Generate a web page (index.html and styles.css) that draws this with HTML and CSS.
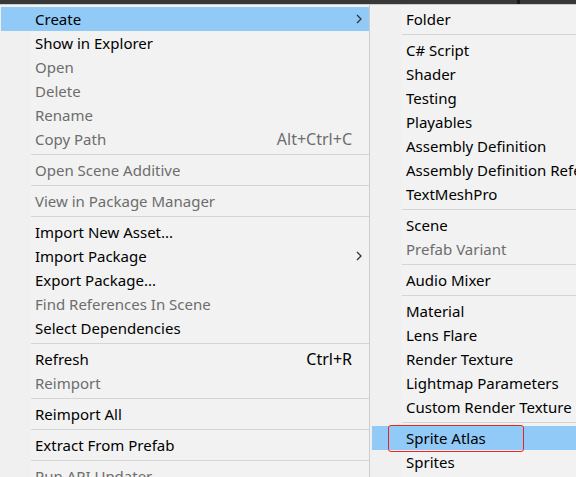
FILE: index.html
```html
<!DOCTYPE html>
<html lang="en">
<head>
<meta charset="utf-8">
<title>Assets menu</title>
<link rel="stylesheet" href="styles.css">
</head>
<body>
<div class="toolbar"><span class="toolbar-pane"></span><span class="toolbar-divider"></span></div>
<div class="menus">
  <div class="menu menu-main" role="menu" aria-label="Assets">
    <button class="item selected" role="menuitem"><span>Create</span><svg class="arrow" viewBox="0 0 6 10"><path d="M1 1l4 4-4 4"/></svg></button>
    <button class="item" role="menuitem">Show in Explorer</button>
    <button class="item" role="menuitem" disabled>Open</button>
    <button class="item" role="menuitem" disabled>Delete</button>
    <button class="item" role="menuitem" disabled>Rename</button>
    <button class="item" role="menuitem" disabled><span>Copy Path</span><span class="shortcut">Alt+Ctrl+C</span></button>
    <hr>
    <button class="item" role="menuitem" disabled>Open Scene Additive</button>
    <hr>
    <button class="item" role="menuitem" disabled>View in Package Manager</button>
    <hr>
    <button class="item" role="menuitem">Import New Asset...</button>
    <button class="item" role="menuitem"><span>Import Package</span><svg class="arrow" viewBox="0 0 6 10"><path d="M1 1l4 4-4 4"/></svg></button>
    <button class="item" role="menuitem">Export Package...</button>
    <button class="item" role="menuitem" disabled>Find References In Scene</button>
    <button class="item" role="menuitem">Select Dependencies</button>
    <hr>
    <button class="item" role="menuitem"><span>Refresh</span><span class="shortcut">Ctrl+R</span></button>
    <button class="item" role="menuitem" disabled>Reimport</button>
    <hr>
    <button class="item" role="menuitem">Reimport All</button>
    <hr>
    <button class="item" role="menuitem">Extract From Prefab</button>
    <hr>
    <button class="item" role="menuitem" disabled>Run API Updater</button>
  </div>
  <div class="menu menu-sub" role="menu" aria-label="Create">
    <button class="item" role="menuitem">Folder</button>
    <hr>
    <button class="item" role="menuitem">C# Script</button>
    <button class="item" role="menuitem">Shader</button>
    <button class="item" role="menuitem">Testing</button>
    <button class="item" role="menuitem">Playables</button>
    <button class="item" role="menuitem">Assembly Definition</button>
    <button class="item" role="menuitem">Assembly Definition Reference</button>
    <button class="item" role="menuitem">TextMeshPro</button>
    <hr>
    <button class="item" role="menuitem">Scene</button>
    <button class="item" role="menuitem" disabled>Prefab Variant</button>
    <hr>
    <button class="item" role="menuitem">Audio Mixer</button>
    <hr>
    <button class="item" role="menuitem">Material</button>
    <button class="item" role="menuitem">Lens Flare</button>
    <button class="item" role="menuitem">Render Texture</button>
    <button class="item" role="menuitem">Lightmap Parameters</button>
    <button class="item" role="menuitem">Custom Render Texture</button>
    <hr>
    <button class="item selected marked" role="menuitem">Sprite Atlas</button>
    <button class="item" role="menuitem">Sprites</button>
  </div>
</div>
</body>
</html>
```
FILE: styles.css
```css
*,
*::after {
  box-sizing: border-box;
}

body {
  margin: 0;
  height: 100vh;
  overflow: hidden;
  display: flex;
  flex-direction: column;
  background: #f2f2f2;
  font: 15px/24px "Noto Sans", "Open Sans", sans-serif;
}

.toolbar {
  flex: none;
  display: flex;
  height: 4px;
  background: #383838;
}

.toolbar-pane {
  flex: 0 1 517px;
}

.toolbar-divider {
  width: 3px;
  background: #191919;
}

.menus {
  flex: 1;
  min-height: 0;
  display: flex;
  overflow: hidden;
  border-top: 1px solid #ccc;
}

.menu {
  display: flex;
  flex-direction: column;
  min-width: 0;
  padding-top: 2px;
  overflow: hidden;
  background: linear-gradient(90deg, #f0f0f0 31px, #f2f2f2 31px);
}

.menu-main {
  flex: 0 0 370px;
  padding-left: 1px;
  border-right: 1px solid #ccc;
}

.menu-sub {
  flex: 1;
  padding-left: 2px;
}

.item {
  flex: none;
  position: relative;
  display: flex;
  justify-content: space-between;
  align-items: center;
  height: 24px;
  margin: 0;
  padding: 0 17px 0 34px;
  border: 0;
  background: none;
  color: #000;
  font: inherit;
  text-align: left;
  white-space: nowrap;
}

.item:disabled {
  color: #6d6d6d;
}

.selected {
  background: #91c9f7;
}

.shortcut {
  font-size: 16px;
}

.arrow {
  width: 6px;
  height: 10px;
  margin-right: -10px;
  fill: none;
  stroke: #333;
  stroke-width: 1.3;
}

hr {
  flex: none;
  width: auto;
  height: 1px;
  margin: 3px 0 3px 30px;
  border: 0;
  background: #d5d5d5;
}

.marked::after {
  content: "";
  position: absolute;
  top: -1px;
  left: 16px;
  width: 136px;
  height: 27px;
  border: 1px solid #f0231e;
  border-radius: 3px;
}
```
